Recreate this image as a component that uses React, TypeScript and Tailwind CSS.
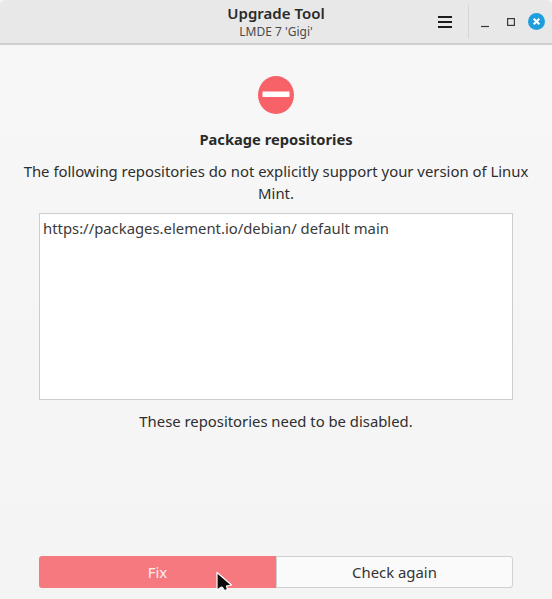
import React from 'react';

const FONT = "font-['Noto_Sans',sans-serif]";

const App: React.FC = () => {
  return (
    <div className={`${FONT} relative w-[552px] h-[599px] flex flex-col bg-[#f5f5f5] text-[#2e2e2e] overflow-hidden`}>
      {/* Barra de título */}
      <header className="h-[45px] shrink-0 flex items-start relative bg-[#e8e8e8] border-b-2 border-[#cfcfcf] rounded-t-[6px]">
        <div className="flex-1 flex flex-col items-center pt-[3px]">
          <span className="text-[15px] leading-[20px] font-semibold text-[#2a2a2a]">Upgrade Tool</span>
          <span className="text-[12px] leading-[16px] mt-[1px] text-[#4a4a4a]">LMDE 7 'Gigi'</span>
        </div>
        <div className="absolute right-0 top-0 h-[43px] flex items-center">
          <svg width="14" height="12" viewBox="0 0 14 12" className="mr-[16px]">
            <path d="M0 1h14M0 6h14M0 11h14" stroke="#1c1c1c" strokeWidth="2" />
          </svg>
          <div className="w-px h-[33px] bg-[#d6d6d6] mr-[12px]" />
          <svg width="8" height="8" viewBox="0 0 8 8" className="mr-[18px] mt-[4px]">
            <path d="M0 6.5h8" stroke="#3a3a3a" strokeWidth="1.2" />
          </svg>
          <svg width="8" height="8" viewBox="0 0 8 8" className="mr-[13px]">
            <rect x="0.6" y="0.6" width="6.8" height="6.8" fill="none" stroke="#3a3a3a" strokeWidth="1.2" />
          </svg>
          <svg width="17" height="17" viewBox="0 0 17 17" className="mr-[7px]">
            <circle cx="8.5" cy="8.5" r="8.5" fill="#1f9ede" />
            <path d="M5.7 5.7l5.6 5.6M11.3 5.7l-5.6 5.6" stroke="#ffffff" strokeWidth="2" />
          </svg>
        </div>
      </header>

      {/* Conteúdo */}
      <main className="flex-1 flex flex-col items-center px-[20px] bg-gradient-to-b from-[#f7f7f7] to-[#f4f4f4]">
        <svg width="36" height="38" viewBox="0 0 36 38" className="mt-[31px]">
          <ellipse cx="18" cy="19" rx="18" ry="19" fill="#f66268" />
          <rect x="4.5" y="15.5" width="27" height="5.5" fill="#ffffff" />
        </svg>
        <h1 className="mt-[15px] text-[14.7px] leading-[20px] font-bold text-[#2a2a2a]">Package repositories</h1>
        <p className="mt-[11px] w-full text-center text-[14.88px] leading-[22px]">
          The following repositories do not explicitly support your version of Linux Mint.
        </p>
        <div className="mt-[9px] w-[474px] h-[187px] shrink-0 bg-white border border-[#cdcdcd] px-[3px] py-[3px] text-[14.85px] leading-[22px] text-[#3a3a3a]">
          https://packages.element.io/debian/ default main
        </div>
        <p className="mt-[10px] text-[14.85px] leading-[22px]">These repositories need to be disabled.</p>

        <div className="mt-auto mb-[11px] w-[474px] h-[32px] flex text-[14.88px]">
          <div className="w-[237px] flex items-center justify-center bg-[#f6797f] text-[#fdeeee] rounded-l-[3px]">Fix</div>
          <div className="flex-1 flex items-center justify-center bg-[#fafafa] border border-[#d0d0d0] rounded-r-[3px] text-[#333333]">
            Check again
          </div>
        </div>
      </main>

      {/* Cursor do mouse */}
      <svg width="18" height="22" viewBox="0 0 18 22" className="absolute left-[215px] top-[571px]">
        <path d="M2 1.5v17.5l4.5-3 1 .5 2 3 3-1-1-3.5 5-1z" fill="#0b0b0b" stroke="#ffffff" strokeWidth="1.2" strokeLinejoin="round" />
      </svg>
    </div>
  );
};

export default App;
